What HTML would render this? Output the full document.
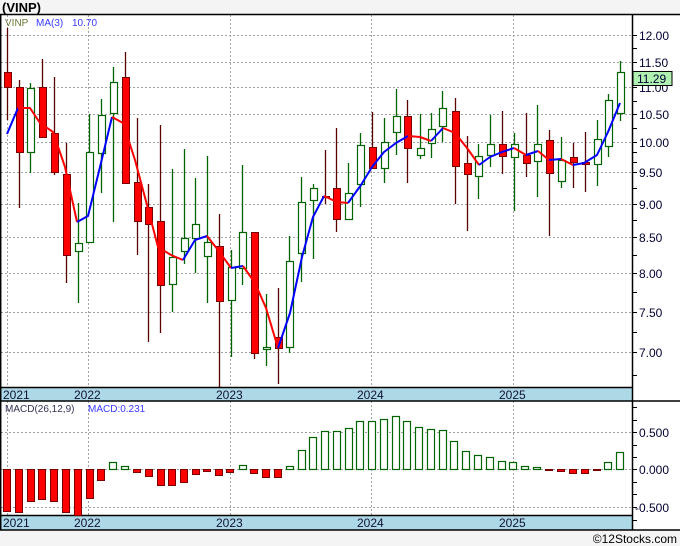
<!DOCTYPE html>
<html><head><meta charset="utf-8"><style>
html,body{margin:0;padding:0;background:#f4f4f4;}
svg{display:block;font-family:"Liberation Sans",sans-serif;}
</style></head><body>
<svg width="680" height="546" viewBox="0 0 680 546" xmlns="http://www.w3.org/2000/svg">
<rect x="0" y="0" width="680" height="546" fill="#f4f4f4"/>
<text x="2" y="12" font-size="13" font-weight="bold" fill="#000">(VINP)</text>
<rect x="1" y="15" width="679" height="515" fill="#fff"/>
<rect x="1" y="388" width="631" height="13" fill="#add8e6"/>
<rect x="1" y="516" width="631" height="14" fill="#add8e6"/>
<g stroke="#a0a0a0" stroke-dasharray="2,2" stroke-width="1">
<line x1="1" x2="632" y1="35.5" y2="35.5"/><line x1="1" x2="632" y1="62.5" y2="62.5"/><line x1="1" x2="632" y1="87.5" y2="87.5"/><line x1="1" x2="632" y1="114.5" y2="114.5"/><line x1="1" x2="632" y1="142.5" y2="142.5"/><line x1="1" x2="632" y1="172.5" y2="172.5"/><line x1="1" x2="632" y1="204.5" y2="204.5"/><line x1="1" x2="632" y1="237.5" y2="237.5"/><line x1="1" x2="632" y1="273.5" y2="273.5"/><line x1="1" x2="632" y1="312.5" y2="312.5"/><line x1="1" x2="632" y1="352.5" y2="352.5"/>
<line x1="1" x2="632" y1="432.5" y2="432.5"/><line x1="1" x2="632" y1="469.5" y2="469.5"/><line x1="1" x2="632" y1="507.5" y2="507.5"/>
<line x1="7.5" x2="7.5" y1="15" y2="387"/><line x1="88.5" x2="88.5" y1="15" y2="387"/><line x1="230.5" x2="230.5" y1="15" y2="387"/><line x1="371.5" x2="371.5" y1="15" y2="387"/><line x1="513.5" x2="513.5" y1="15" y2="387"/>
<line x1="7.5" x2="7.5" y1="401" y2="515"/><line x1="88.5" x2="88.5" y1="401" y2="515"/><line x1="230.5" x2="230.5" y1="401" y2="515"/><line x1="371.5" x2="371.5" y1="401" y2="515"/><line x1="513.5" x2="513.5" y1="401" y2="515"/>
</g>
<g stroke="#000" stroke-width="1.5" fill="none">
<line x1="0" x2="680" y1="14.5" y2="14.5"/>
<line x1="0.7" x2="0.7" y1="14" y2="530"/>
<line x1="0" x2="632" y1="387.5" y2="387.5"/>
<line x1="0" x2="680" y1="401" y2="401"/>
<line x1="0" x2="632" y1="515.5" y2="515.5"/>
<line x1="0" x2="680" y1="530" y2="530"/>
<line x1="632.5" x2="632.5" y1="14" y2="530"/>
</g>
<g stroke="#000" stroke-width="1">
<line x1="632" x2="637" y1="35.5" y2="35.5"/><line x1="632" x2="637" y1="48.5" y2="48.5"/><line x1="632" x2="637" y1="62.5" y2="62.5"/><line x1="632" x2="637" y1="75.5" y2="75.5"/><line x1="632" x2="637" y1="87.5" y2="87.5"/><line x1="632" x2="637" y1="101.5" y2="101.5"/><line x1="632" x2="637" y1="114.5" y2="114.5"/><line x1="632" x2="637" y1="128.5" y2="128.5"/><line x1="632" x2="637" y1="142.5" y2="142.5"/><line x1="632" x2="637" y1="152.5" y2="152.5"/><line x1="632" x2="637" y1="162.5" y2="162.5"/><line x1="632" x2="637" y1="172.5" y2="172.5"/><line x1="632" x2="637" y1="188.5" y2="188.5"/><line x1="632" x2="637" y1="204.5" y2="204.5"/><line x1="632" x2="637" y1="220.5" y2="220.5"/><line x1="632" x2="637" y1="237.5" y2="237.5"/><line x1="632" x2="637" y1="255.5" y2="255.5"/><line x1="632" x2="637" y1="273.5" y2="273.5"/><line x1="632" x2="637" y1="292.5" y2="292.5"/><line x1="632" x2="637" y1="312.5" y2="312.5"/><line x1="632" x2="637" y1="332.5" y2="332.5"/><line x1="632" x2="637" y1="352.5" y2="352.5"/><line x1="632" x2="637" y1="375.5" y2="375.5"/>
<line x1="632" x2="637" y1="407.5" y2="407.5"/><line x1="632" x2="637" y1="420.5" y2="420.5"/><line x1="632" x2="637" y1="432.5" y2="432.5"/><line x1="632" x2="637" y1="445.5" y2="445.5"/><line x1="632" x2="637" y1="457.5" y2="457.5"/><line x1="632" x2="637" y1="469.5" y2="469.5"/><line x1="632" x2="637" y1="482.5" y2="482.5"/><line x1="632" x2="637" y1="494.5" y2="494.5"/><line x1="632" x2="637" y1="507.5" y2="507.5"/><line x1="632" x2="637" y1="520.5" y2="520.5"/>
</g>
<g font-size="12" fill="#000033">
<text x="639" y="40">12.00</text><text x="639" y="67">11.50</text><text x="639" y="92">11.00</text><text x="639" y="119">10.50</text><text x="639" y="147">10.00</text><text x="639" y="177">9.50</text><text x="639" y="209">9.00</text><text x="639" y="242">8.50</text><text x="639" y="278">8.00</text><text x="639" y="317">7.50</text><text x="639" y="357">7.00</text>
<text x="639" y="437">0.500</text><text x="639" y="474">0.000</text><text x="635" y="512">-0.500</text>
</g>
<rect x="633" y="71.5" width="39" height="14" fill="#b0f0b0" stroke="#000"/>
<text x="637" y="83" font-size="12" fill="#000033">11.29</text>
<g font-size="12" fill="#111133">
<text x="3" y="399">2021</text><text x="74" y="399">2022</text><text x="216" y="399">2023</text><text x="357" y="399">2024</text><text x="499" y="399">2025</text>
<text x="3" y="527">2021</text><text x="74" y="527">2022</text><text x="216" y="527">2023</text><text x="357" y="527">2024</text><text x="499" y="527">2025</text>
</g>
<text x="5" y="26" font-size="10" fill="#6b7b3a">VINP</text>
<text x="36" y="26" font-size="10" fill="#3a3aff">MA(3)</text>
<text x="72" y="26" font-size="10" fill="#3a3aff">10.70</text>
<text x="5" y="412" font-size="10" fill="#333355">MACD(26,12,9)</text>
<text x="88" y="412" font-size="10" fill="#3a3aff">MACD:0.231</text>
<text x="677" y="543" font-size="12" fill="#000" text-anchor="end">©12Stocks.com</text>

<!-- candles -->
<g stroke-width="1.3">
<g stroke="#5a0000">
<line x1="7.5" x2="7.5" y1="28" y2="120"/><line x1="19.5" x2="19.5" y1="80" y2="208"/><line x1="42.5" x2="42.5" y1="59" y2="138"/><line x1="54.5" x2="54.5" y1="77" y2="175"/><line x1="66.5" x2="66.5" y1="143" y2="283"/><line x1="125.5" x2="125.5" y1="52" y2="183"/><line x1="137.5" x2="137.5" y1="118" y2="255"/><line x1="148.5" x2="148.5" y1="184" y2="342"/><line x1="160.5" x2="160.5" y1="125" y2="333"/><line x1="219.5" x2="219.5" y1="214" y2="387"/><line x1="254.5" x2="254.5" y1="232" y2="359"/><line x1="278.5" x2="278.5" y1="288" y2="384"/><line x1="325.5" x2="325.5" y1="150" y2="204"/><line x1="336.5" x2="336.5" y1="128" y2="232"/><line x1="372.5" x2="372.5" y1="112" y2="168"/><line x1="407.5" x2="407.5" y1="100" y2="183"/><line x1="455.5" x2="455.5" y1="98" y2="204"/><line x1="467.5" x2="467.5" y1="136" y2="231"/><line x1="502.5" x2="502.5" y1="111" y2="174"/><line x1="526.5" x2="526.5" y1="113" y2="177"/><line x1="549.5" x2="549.5" y1="130" y2="236"/><line x1="573.5" x2="573.5" y1="143" y2="188"/><line x1="585.5" x2="585.5" y1="132" y2="192"/>
</g>
<g stroke="#006400">
<line x1="30.5" x2="30.5" y1="83" y2="173"/><line x1="78.5" x2="78.5" y1="203" y2="303"/><line x1="89.5" x2="89.5" y1="114" y2="242"/><line x1="101.5" x2="101.5" y1="99" y2="193"/><line x1="113.5" x2="113.5" y1="67" y2="222"/><line x1="172.5" x2="172.5" y1="169" y2="312"/><line x1="184.5" x2="184.5" y1="149" y2="264"/><line x1="195.5" x2="195.5" y1="178" y2="273"/><line x1="207.5" x2="207.5" y1="156" y2="303"/><line x1="231.5" x2="231.5" y1="250" y2="357"/><line x1="242.5" x2="242.5" y1="165" y2="285"/><line x1="266.5" x2="266.5" y1="294" y2="366"/><line x1="289.5" x2="289.5" y1="236" y2="353"/><line x1="301.5" x2="301.5" y1="177" y2="282"/><line x1="313.5" x2="313.5" y1="184" y2="259"/><line x1="348.5" x2="348.5" y1="163" y2="219"/><line x1="360.5" x2="360.5" y1="133" y2="207"/><line x1="384.5" x2="384.5" y1="118" y2="183"/><line x1="396.5" x2="396.5" y1="89" y2="155"/><line x1="420.5" x2="420.5" y1="114" y2="159"/><line x1="431.5" x2="431.5" y1="113" y2="158"/><line x1="442.5" x2="442.5" y1="91" y2="142"/><line x1="478.5" x2="478.5" y1="144" y2="199"/><line x1="490.5" x2="490.5" y1="115" y2="167"/><line x1="514.5" x2="514.5" y1="133" y2="211"/><line x1="537.5" x2="537.5" y1="105" y2="197"/><line x1="561.5" x2="561.5" y1="137" y2="188"/><line x1="597.5" x2="597.5" y1="120" y2="186"/><line x1="608.5" x2="608.5" y1="94" y2="157"/><line x1="620.5" x2="620.5" y1="61" y2="121"/>
</g>
</g>
<g fill="#ff0000" stroke="#7a0000" stroke-width="1">
<rect x="4.5" y="72.5" width="7" height="15"/><rect x="16.5" y="87.5" width="7" height="65"/><rect x="39.5" y="87.5" width="7" height="50"/><rect x="51.5" y="133.5" width="7" height="39"/><rect x="63.5" y="174.5" width="7" height="81"/><rect x="122.5" y="77.5" width="7" height="106"/><rect x="134.5" y="182.5" width="7" height="39"/><rect x="145.5" y="207.5" width="7" height="17"/><rect x="157.5" y="221.5" width="7" height="64"/><rect x="216.5" y="246.5" width="7" height="55"/><rect x="251.5" y="232.5" width="7" height="121"/><rect x="275.5" y="337.5" width="7" height="11"/><rect x="322.5" y="196.5" width="7" height="1"/><rect x="333.5" y="188.5" width="7" height="31"/><rect x="369.5" y="147.5" width="7" height="21"/><rect x="404.5" y="116.5" width="7" height="32"/><rect x="452.5" y="111.5" width="7" height="55"/><rect x="464.5" y="163.5" width="7" height="11"/><rect x="499.5" y="144.5" width="7" height="12"/><rect x="523.5" y="155.5" width="7" height="8"/><rect x="546.5" y="140.5" width="7" height="33"/><rect x="570.5" y="157.5" width="7" height="5"/><rect x="582.5" y="162.5" width="7" height="2"/>
</g>
<g fill="#fff" stroke="#006400" stroke-width="1.2">
<rect x="27.5" y="88.5" width="7" height="64"/><rect x="75.5" y="243.5" width="7" height="8"/><rect x="86.5" y="152.5" width="7" height="90"/><rect x="98.5" y="115.5" width="7" height="38"/><rect x="110.5" y="82.5" width="7" height="31"/><rect x="169.5" y="257.5" width="7" height="27"/><rect x="181.5" y="238.5" width="7" height="13"/><rect x="192.5" y="224.5" width="7" height="14"/><rect x="204.5" y="242.5" width="7" height="14"/><rect x="228.5" y="267.5" width="7" height="33"/><rect x="239.5" y="232.5" width="7" height="36"/><rect x="263.5" y="347.5" width="7" height="2"/><rect x="286.5" y="261.5" width="7" height="86"/><rect x="298.5" y="202.5" width="7" height="51"/><rect x="310.5" y="188.5" width="7" height="12"/><rect x="345.5" y="193.5" width="7" height="26"/><rect x="357.5" y="145.5" width="7" height="39"/><rect x="381.5" y="142.5" width="7" height="26"/><rect x="393.5" y="116.5" width="7" height="16"/><rect x="417.5" y="148.5" width="7" height="7"/><rect x="428.5" y="129.5" width="7" height="14"/><rect x="439.5" y="108.5" width="7" height="18"/><rect x="475.5" y="156.5" width="7" height="20"/><rect x="487.5" y="144.5" width="7" height="11"/><rect x="511.5" y="144.5" width="7" height="13"/><rect x="534.5" y="144.5" width="7" height="17"/><rect x="558.5" y="160.5" width="7" height="21"/><rect x="594.5" y="139.5" width="7" height="25"/><rect x="605.5" y="100.5" width="7" height="46"/><rect x="617.5" y="72.5" width="7" height="41"/>
</g>
<!-- MA lines -->
<g fill="none" stroke-width="2" stroke-linejoin="round">
<polyline stroke="#0000ff" points="7,134 18,108"/>
<polyline stroke="#ff0000" points="18,108 30,108 40,123 53,132 65,167 77,222"/>
<polyline stroke="#0000ff" points="77,222 88,216 100,167 112,117"/>
<polyline stroke="#ff0000" points="112,117 123,123 135,160 147,205 158,247 171,255 183,260"/>
<polyline stroke="#0000ff" points="183,260 195,240 207,236"/>
<polyline stroke="#ff0000" points="207,236 218,250 231,268"/>
<polyline stroke="#0000ff" points="231,268 243,266"/>
<polyline stroke="#ff0000" points="243,266 255,283 266,308 278,348"/>
<polyline stroke="#0000ff" points="278,348 290,313 302,257 313,217 324,196"/>
<polyline stroke="#ff0000" points="324,196 337,202 348,203"/>
<polyline stroke="#0000ff" points="348,203 361,185 372,167 384,152 396,143 408,136"/>
<polyline stroke="#ff0000" points="408,136 420,137 431,141"/>
<polyline stroke="#0000ff" points="431,141 443,128"/>
<polyline stroke="#ff0000" points="443,128 455,133 467,148 479,165"/>
<polyline stroke="#0000ff" points="479,165 490,157 502,152 514,148"/>
<polyline stroke="#ff0000" points="514,148 526,155"/>
<polyline stroke="#0000ff" points="526,155 538,151"/>
<polyline stroke="#ff0000" points="538,151 549,160"/>
<polyline stroke="#0000ff" points="549,160 561,159"/>
<polyline stroke="#ff0000" points="561,159 573,165"/>
<polyline stroke="#0000ff" points="573,165 584,163 597,155 608,132 620,103"/>
</g>
<!-- MACD -->
<g fill="#ff0000" stroke="#7a0000" stroke-width="1">
<rect x="3.5" y="469.5" width="7" height="42"/><rect x="15.5" y="469.5" width="7" height="43"/><rect x="27.5" y="469.5" width="7" height="32"/><rect x="38.5" y="469.5" width="7" height="30"/><rect x="50.5" y="469.5" width="7" height="32"/><rect x="62.5" y="469.5" width="7" height="43"/><rect x="74.5" y="469.5" width="7" height="46"/><rect x="86.5" y="469.5" width="7" height="29"/><rect x="97.5" y="469.5" width="7" height="11"/>
<rect x="133.5" y="469.5" width="7" height="3"/><rect x="145.5" y="469.5" width="7" height="7"/><rect x="157.5" y="469.5" width="7" height="16"/><rect x="168.5" y="469.5" width="7" height="16"/><rect x="180.5" y="469.5" width="7" height="13"/><rect x="192.5" y="469.5" width="7" height="5"/><rect x="203.5" y="469.5" width="7" height="2"/><rect x="215.5" y="469.5" width="7" height="6"/><rect x="226.5" y="469.5" width="7" height="3"/>
<rect x="250.5" y="469.5" width="7" height="4"/><rect x="262.5" y="469.5" width="7" height="8"/><rect x="274.5" y="469.5" width="7" height="8"/>
<rect x="545.5" y="469.5" width="7" height="1"/><rect x="557.5" y="469.5" width="7" height="2"/><rect x="569.5" y="469.5" width="7" height="4"/><rect x="581.5" y="469.5" width="7" height="4"/><rect x="593.5" y="469.5" width="7" height="1"/>
</g>
<g fill="#fff" stroke="#006400" stroke-width="1.2">
<rect x="109.5" y="462.5" width="7" height="7"/><rect x="121.5" y="466.5" width="7" height="3"/><rect x="239.5" y="465.5" width="7" height="4"/><rect x="286.5" y="466.5" width="7" height="3"/>
<rect x="298.5" y="450.5" width="7" height="19"/><rect x="309.5" y="437.5" width="7" height="32"/><rect x="321.5" y="431.5" width="7" height="38"/><rect x="333.5" y="431.5" width="7" height="38"/><rect x="345.5" y="428.5" width="7" height="41"/><rect x="356.5" y="421.5" width="7" height="48"/><rect x="368.5" y="421.5" width="7" height="48"/><rect x="380.5" y="419.5" width="7" height="50"/><rect x="392.5" y="416.5" width="7" height="53"/><rect x="403.5" y="421.5" width="7" height="48"/><rect x="415.5" y="427.5" width="7" height="42"/><rect x="427.5" y="429.5" width="7" height="40"/><rect x="439.5" y="430.5" width="7" height="39"/><rect x="450.5" y="441.5" width="7" height="28"/><rect x="462.5" y="451.5" width="7" height="18"/><rect x="474.5" y="455.5" width="7" height="14"/><rect x="486.5" y="457.5" width="7" height="12"/><rect x="498.5" y="461.5" width="7" height="8"/><rect x="509.5" y="462.5" width="7" height="7"/><rect x="521.5" y="466.5" width="7" height="3"/><rect x="533.5" y="467.5" width="7" height="2"/>
<rect x="604.5" y="462.5" width="7" height="7"/><rect x="616.5" y="452.5" width="7" height="17"/>
</g>
</svg>
</body></html>
